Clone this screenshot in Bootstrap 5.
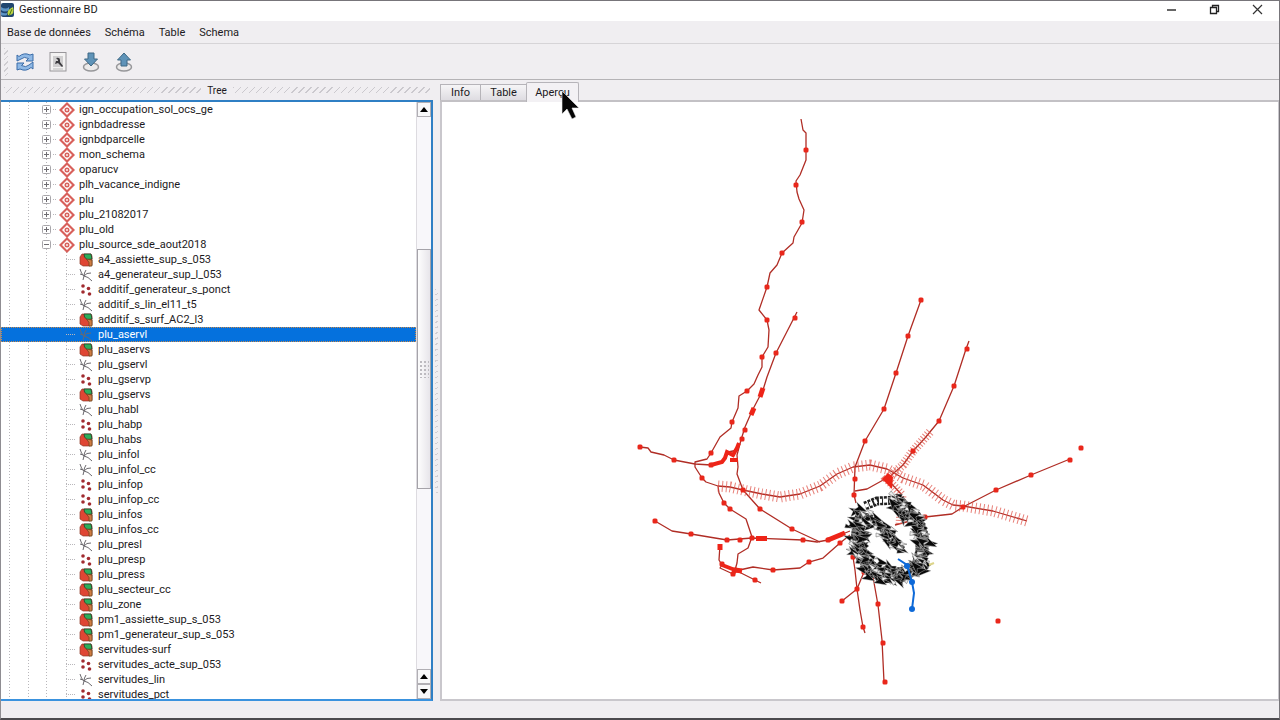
<!DOCTYPE html>
<html lang="fr">
<head>
<meta charset="utf-8">
<meta name="viewport" content="width=device-width, initial-scale=1">
<title>Gestionnaire BD</title>
<link rel="stylesheet" href="https://cdn.jsdelivr.net/npm/bootstrap@5.3.0/dist/css/bootstrap.min.css">
<style>
  body { font-family: Roboto, "Open Sans", sans-serif; font-size: 11px; line-height: 15px; color: #1c1a22; background: #f0eef1; }
  .app-window { border: 1px solid #77757a; border-left-color: #8f8d92; border-bottom: 2px solid #4c4a4e; }
  button { border: 0; background: none; padding: 0; color: inherit; }
  .title-bar { height: 20px; padding-bottom: 3px; background: #fff; }
  .win-btn { width: 43px; height: 16px; display: flex; align-items: center; justify-content: center; }
  .menu-bar { height: 23px; border-bottom: 1px solid #d6d4d7; padding-left: 6px; gap: 14px; }
  .tool-bar { height: 36px; border-bottom: 1px solid #b5b3b6; padding-left: 3px; }
  .tool-bar button { width: 33px; height: 28px; display: flex; align-items: center; justify-content: center; }
  .grip-v { width: 4px; height: 28px; background: repeating-linear-gradient(135deg, #cfcdd1 0 1px, transparent 1px 4px); }
  .work-area { min-height: 0; }
  .dock { flex: 0 0 432px; }
  .dock-title { height: 20px; gap: 6px; padding: 0 3px; font-size: 10px; }
  .grip-h { height: 6px; background: repeating-linear-gradient(135deg, #cbc9ce 0 1px, transparent 1px 5px); }
  .tree-frame { border: 2px solid #2f7fc4; border-left: 0; border-bottom-color: #3a92de; background: #fff; min-height: 0; }
  .tree-list { margin: 0; padding: 0; list-style: none; overflow: hidden; min-height: 0;
    background: repeating-linear-gradient(#b9b7bb 0 1px, transparent 1px 3px) 8px 0 / 1px 100% no-repeat, repeating-linear-gradient(#b9b7bb 0 1px, transparent 1px 3px) 27px 0 / 1px 100% no-repeat, repeating-linear-gradient(#b9b7bb 0 1px, transparent 1px 3px) 45px 0 / 1px 100% no-repeat; }
  .tree-list li { height: 15px; display: flex; align-items: center; white-space: nowrap; padding-left: 41px; }
  .tree-list li.leaf { padding-left: 65px;
    background: repeating-linear-gradient(#b9b7bb 0 1px, transparent 1px 3px) 65px 0 / 1px 100% no-repeat; }
  .tree-list li.picked { background: #0571dd; color: #fff; outline: 1px dotted #c98a4a; outline-offset: -1px; }
  .layer-name { margin-left: 5px; }
  .stub { width: 9px; height: 1px; background: repeating-linear-gradient(90deg, #b9b7bb 0 1px, transparent 1px 2px); }
  .tree-list .stub { margin-right: 4px; }
  .tree-list li.branch .stub { width: 4px; margin-right: 2px; margin-left: 2px; }
  .scroll-track { width: 15px; border-left: 1px solid #dddbe0; background: #f8f7fa; }
  .scroll-track button { height: 15px; border: 1px solid #b1afb4; background: #f8f8f9; display: flex; align-items: center; justify-content: center; }
  .thumb { border: 1px solid #a5a3a9; background: linear-gradient(90deg, #fdfdfd, #e7e5ea); flex: 0 0 240px; margin-top: 132px; }
  .thumb-dots { width: 10px; height: 18px; background: radial-gradient(circle, #bdbbc0 1px, transparent 1px) 0 0 / 4px 4px; }
  .splitter { flex: 0 0 7px; }
  .splitter-dots { width: 3px; height: 204px; background: repeating-linear-gradient(155deg, #d0ced3 0 1px, transparent 1px 5px); }
  .view-tabs { height: 22px; border-bottom: 2px solid #c3c1c5; }
  .view-tabs button { border: 1px solid #b6b4b9; border-bottom: 0; height: 16px; background: linear-gradient(#f6f5f7, #dedce1); margin-left: -1px; line-height: 15px; }
  .view-tabs button:first-child { margin-left: 0; width: 41px; }
  .view-tabs button:nth-child(2) { width: 47px; }
  .view-tabs button.active { width: 53px; height: 20px; background: #f3f1f4; border-radius: 2px 2px 0 0; margin-bottom: -2px; line-height: 19px; }
  .map-pane { background: #fff; border: 2px solid #c9c7cc; border-top: 0; border-right-width: 1px; min-height: 0; }
  .status-bar { height: 17px; }
  .pointer { position: absolute; left: 560px; top: 89px; }
</style>
</head>
<body>
<svg width="0" height="0" class="position-absolute" aria-hidden="true">
  <symbol id="i-schema" viewBox="0 0 16 16"><path d="M8 0 16 8 8 16 0 8z" fill="#d8605b"/><path d="M8 3 13 8 8 13 3 8z" fill="#fff"/><circle cx="8" cy="8" r="1.800" fill="#fbe3e2" stroke="#d8605b" stroke-width="1.400"/></symbol>
  <symbol id="i-poly" viewBox="0 0 14 14"><path d="M3 1h9l1 2v9l-2 1H4L1 11V4z" fill="#df4634" stroke="#8d3a28" stroke-width=".7"/><path d="M5 1h7l1 5-5 .5L5.500 4z" fill="#2dae5b" stroke="#22432a" stroke-width=".8"/><path d="M7.500 6 13 7v6h-3L10 9.500z" fill="#cf7c42" stroke="#6e4420" stroke-width=".8"/></symbol>
  <symbol id="i-line" viewBox="0 0 14 14"><path d="M1 1 2.500 5 5 8 4 12M5 8 8 5.500 12 5M5 8l4 1.500 4 3.500M7 2 5.500 5 5 8M1 6l3 1" fill="none" stroke="#6b696e"/></symbol>
  <symbol id="i-point" viewBox="0 0 14 14"><g fill="#a12b30"><circle cx="4" cy="3" r="1.800"/><circle cx="9.500" cy="5.500" r="1.800"/><circle cx="4" cy="9" r="1.800"/><circle cx="10.500" cy="11" r="1.800"/></g></symbol>
  <symbol id="i-plus" viewBox="0 0 9 9"><rect x=".5" y=".5" width="8" height="8" rx="1" fill="#fff" stroke="#a8a6aa"/><path d="M2 4.500h5M4.500 2v5" stroke="#6f6d72"/></symbol>
  <symbol id="i-minus" viewBox="0 0 9 9"><rect x=".5" y=".5" width="8" height="8" rx="1" fill="#fff" stroke="#a8a6aa"/><path d="M2 4.500h5" stroke="#6f6d72"/></symbol>
</svg>

<div class="app-window vh-100 d-flex flex-column overflow-hidden position-relative">
  <header class="title-bar d-flex align-items-center flex-shrink-0">
    <svg width="14" height="16" viewBox="0 0 14 16"><rect y="1" width="13" height="14" rx="2" fill="#21466f"/><path d="M0 5q5 3 8 0v3q-4 3-8 0z" fill="#5e95c5"/><path d="M0 10q3 2 6 1v2q-3 1-6 0z" fill="#5e95c5"/><path d="M7 13q-2-5 5-8 2 7-3 8z" fill="#bdd541"/><path d="M8 14l3-7" stroke="#4f7a22"/></svg>
    <span class="ms-1">Gestionnaire BD</span>
    <div class="ms-auto d-flex">
      <button class="win-btn" aria-label="Réduire"><svg width="11" height="11"><path d="M1 6h9" stroke="#333" stroke-width="1.500"/></svg></button>
      <button class="win-btn" aria-label="Restaurer"><svg width="11" height="11"><path d="M1.500 3.500h6v6h-6zM3.500 3V1.500h6v6H8" fill="none" stroke="#222" stroke-width="1.300"/></svg></button>
      <button class="win-btn" aria-label="Fermer"><svg width="11" height="11"><path d="M1 1l9 9M10 1 1 10" stroke="#333" stroke-width="1.200"/></svg></button>
    </div>
  </header>

  <nav class="menu-bar d-flex align-items-center flex-shrink-0">
    <button>Base de données</button><button>Schéma</button><button>Table</button><button>Schema</button>
  </nav>

  <div class="tool-bar d-flex align-items-center flex-shrink-0">
    <span class="grip-v"></span>
    <button aria-label="Actualiser"><svg width="20" height="20" viewBox="0 0 20 20"><path d="M2 9V3l2 1.500Q9 0 15 3l3-1v7h-7l2.500-2.500Q9 4 6 7z" fill="#8fb9e6" stroke="#3b6ca8"/><path d="M18 10v7l-2-1.500Q11 20 5 17l-3 1v-7h7l-2.500 2.500Q11 16 14 13z" fill="#8fb9e6" stroke="#3b6ca8"/></svg></button>
    <button aria-label="Fenêtre SQL"><svg width="18" height="20" viewBox="0 0 18 20"><rect x="1" y=".5" width="16" height="18.500" fill="#f4f3f3" stroke="#98969a"/><rect x="4" y="4" width="10" height="11" fill="#d0cfd0"/><path d="M7 6q4-1 4 2v2l3 4-1 1-4-4-3 1 1-3 2 0V8z" fill="#3c3b3f"/><path d="M4 17h10" stroke="#bbb"/></svg></button>
    <button aria-label="Importer"><svg width="18" height="20" viewBox="0 0 18 20"><ellipse cx="9" cy="15" rx="7.500" ry="4" fill="#eceaea" stroke="#97979a" stroke-width="1.500"/><path d="M6 1h6v6h3.500L9 14 2.500 7H6z" fill="#5f93b8" stroke="#3e6885"/></svg></button>
    <button aria-label="Exporter"><svg width="18" height="20" viewBox="0 0 18 20"><ellipse cx="9" cy="15" rx="7.500" ry="4" fill="#eceaea" stroke="#97979a" stroke-width="1.500"/><path d="M6 14h6V8h3.500L9 1 2.500 8H6z" fill="#5f93b8" stroke="#3e6885"/></svg></button>
  </div>

  <main class="work-area d-flex flex-fill">
    <section class="dock d-flex flex-column">
      <div class="dock-title d-flex align-items-center flex-shrink-0"><span class="grip-h flex-fill"></span><span>Tree</span><span class="grip-h flex-fill"></span></div>
      <div class="tree-frame d-flex flex-fill">
        <ul class="tree-list flex-fill" id="tree"></ul>
        <div class="scroll-track d-flex flex-column">
          <button aria-label="Haut"><svg width="8" height="5"><path d="M0 5 4 0l4 5z"/></svg></button>
          <div class="thumb d-flex align-items-center justify-content-center"><span class="thumb-dots"></span></div>
          <button class="mt-auto" aria-label="Haut"><svg width="8" height="5"><path d="M0 5 4 0l4 5z"/></svg></button>
          <button aria-label="Bas"><svg width="8" height="5"><path d="M0 0 4 5l4-5z"/></svg></button>
        </div>
      </div>
    </section>
    <div class="splitter d-flex align-items-center justify-content-center"><span class="splitter-dots"></span></div>
    <section class="flex-fill d-flex flex-column">
      <div class="view-tabs d-flex align-items-end flex-shrink-0" role="tablist">
        <button role="tab">Info</button><button role="tab">Table</button><button role="tab" class="active">Aperçu</button>
      </div>
      <div class="map-pane flex-fill">
        <svg class="d-block w-100 h-100" viewBox="442 102 836 597">
          <g fill="none" stroke="#b02d25" stroke-width="1.300" stroke-linejoin="round">
            <path d="M801 119 803 130 806 133 806 160 800 175 796 181 797 192 799 199 804 210 802 223 794 237 793 243 782 253 777 265 770 273 767 287 759 310 767 320 769 330 768 347 762 357 762 367 758 375 754 384 747 391 739 396 738 408 732 422 731 428 720 437 711 453 707 459 695 462 695 467 702 478 706 482 718 486 719 493 724 503 730 509 746 519 752 537 748 548 738 554 737 563 735 570"/>
            <path d="M797 312 776 353 767 377 763 390 752 411 745 427 741 440 737 455 738 467 737 474 743 490 760 509 792 529 820 542"/>
            <path d="M640 447 648 448 651 452 664 455 674 460 695 464 711 465 723 462 728 452 738 450"/>
            <path d="M655 521 672 531 691 534 727 540 752 538 803 540 817 542 828 540 840 535 850 531"/>
            <path d="M720 545 719 560 722 565 720 568 733 574M735 570 755 580 761 583M735 571 753 567 773 570 800 568 809 562 823 558 840 543 850 535"/>
            <path d="M921 300 908 336 896 373 884 409 865 441 855 467 854 495 856 503M855 491 867 489 885 479M969 341 966 349 954 386 939 421 925 438 913 451 903 465 887 479 902 495"/>
            <path d="M1070 459 1031 475 996 490 963 507 952 514 925 517 910 521 895 525"/>
            <path d="M853 557 855 570 857 589 860 610 863 627 865 633M864 572 857 589 842 601M873 577 878 605 882 640 884 682"/>
            <path d="M718 486 730 487 743 490 762 494 780 497 800 494 820 486 837 474 853 467 870 465 887 469 903 478 923 485 943 500 953 505 963 506 993 511 1027 521"/>
          </g>
          <g fill="none" stroke="#e0564c" stroke-dasharray="1 3" opacity=".75">
            <path stroke-width="11" d="M718 486 730 487 743 490 762 494 780 497 800 494 820 486 837 474 853 467 870 465 887 469 903 478 923 485 943 500 953 505 963 506 993 511 1027 521"/>
            <path stroke-width="9" stroke-dasharray="1 2" d="M930 432 913 451 903 465 887 479 902 495 900 525"/>
          </g>
          <path d="M882 479l6-6 5 4-1 12z" fill="#ee2418"/>
          <g fill="none" stroke="#ee2418" stroke-width="5">
            <path d="M763 388 760 397M754 408 751 415M756 538.500H767M735 570 742 571M720 544V550M828 540 845 533"/>
            <path d="M711 465 722 462 725 458 727 452 733 455 737 448 739 443M730 460H738M722 565 735 570 733 574" stroke-width="4"/>
          </g>
          <g id="stops" fill="#e9271b"></g>
          <g id="burst"></g>
          <g fill="none" stroke="#0d69d8" stroke-width="2"><path d="M898 559 907 565 912 582 914 593 912 609"/></g>
          <g fill="#0d69d8"><circle cx="907" cy="566" r="3"/><circle cx="912" cy="582" r="3"/><circle cx="912" cy="609" r="3"/></g>
          <path d="M929 565l5-2" stroke="#ddd58a" stroke-width="2"/>
        </svg>
      </div>
    </section>
  </main>
  <footer class="status-bar flex-shrink-0"></footer>
  <svg class="pointer" width="18" height="32" viewBox="0 0 18 32"><path d="M1 1v23l5-5 5 10 4-2-4-9h7z" fill="#050505" stroke="#eee" stroke-width=".6"/></svg>
</div>

<script>
  const schemas = ['ign_occupation_sol_ocs_ge', 'ignbdadresse', 'ignbdparcelle', 'mon_schema', 'oparucv', 'plh_vacance_indigne', 'plu', 'plu_21082017', 'plu_old', 'plu_source_sde_aout2018'];
  const layers = [
    ['poly', 'a4_assiette_sup_s_053'], ['line', 'a4_generateur_sup_l_053'], ['point', 'additif_generateur_s_ponct'], ['line', 'additif_s_lin_el11_t5'], ['poly', 'additif_s_surf_AC2_l3'],
    ['line', 'plu_aservl'], ['poly', 'plu_aservs'], ['line', 'plu_gservl'], ['point', 'plu_gservp'], ['poly', 'plu_gservs'], ['line', 'plu_habl'], ['point', 'plu_habp'], ['poly', 'plu_habs'],
    ['line', 'plu_infol'], ['line', 'plu_infol_cc'], ['point', 'plu_infop'], ['point', 'plu_infop_cc'], ['poly', 'plu_infos'], ['poly', 'plu_infos_cc'], ['line', 'plu_presl'], ['point', 'plu_presp'],
    ['poly', 'plu_press'], ['poly', 'plu_secteur_cc'], ['poly', 'plu_zone'], ['poly', 'pm1_assiette_sup_s_053'], ['poly', 'pm1_generateur_sup_s_053'], ['poly', 'servitudes-surf'],
    ['point', 'servitudes_acte_sup_053'], ['line', 'servitudes_lin'], ['point', 'servitudes_pct']];
  const icon = (name, w, h) => `<svg class="flex-shrink-0" width="${w}" height="${h}"><use href="#i-${name}"/></svg>`;
  document.getElementById('tree').innerHTML =
    schemas.map((s, i) => `<li class="branch">${icon(i === 9 ? 'minus' : 'plus', 9, 9)}<span class="stub"></span>${icon('schema', 16, 16)}<span class="ms-1">${s}</span></li>`).join('') +
    layers.map(([kind, s]) => `<li class="leaf${s === 'plu_aservl' ? ' picked' : ''}"><span class="stub"></span>${icon(kind, 14, 14)}<span class="layer-name">${s}</span></li>`).join('');

  const stops = [[806,150],[796,185],[802,222],[782,253],[767,287],[767,320],[762,357],[747,391],[732,422],[711,453],[702,478],[795,318],[776,353],[745,430],[742,439],[640,447],[674,460],[711,465],[743,490],[760,509],[792,529],[724,503],[730,509],[752,538],[655,521],[691,534],[727,540],[740,540],[803,540],[828,540],[722,564],[733,574],[735,570],[755,580],[773,570],[809,562],[840,543],[921,300],[908,336],[896,373],[884,409],[865,441],[855,479],[854,495],[967,349],[954,386],[939,421],[913,451],[1081,448],[1070,460],[1031,475],[996,490],[963,507],[925,517],[853,557],[857,589],[842,601],[864,572],[863,627],[878,604],[883,643],[885,682],[998,621]];
  document.getElementById('stops').innerHTML = stops.map(([x, y]) => `<rect x="${x - 2.5}" y="${y - 2.5}" width="5" height="5" rx="1.500"/>`).join('');

  // Dense arrow symbols packed along the ring road and its inner diagonal.
  let seed = 11;
  const rnd = () => (seed = (seed * 16807) % 2147483647) / 2147483647;
  const trail = [[863,512],[859,525],[857,540],[859,552],[868,564],[878,573],[888,575],[905,573],[917,568],[922,552],[922,535],[915,517],[903,507],[898,500]];
  const inner = [[876,523],[890,535],[902,550]];
  let out = '<g fill="none" stroke="#222" stroke-width="9"><path stroke-dasharray="3 1" d="M865 506 877 501 898 500"/></g><path d="M865 506 877 501 898 500" fill="none" stroke="#fff" stroke-width="4" stroke-dasharray="3 2"/>';
  const strands = (pts, spread) => {
    const d = 'M' + pts.join(' ');
    out += `<path d="${d}" fill="none" stroke="#777" stroke-width="${spread}"/><path d="${d}" fill="none" stroke="#222" stroke-width="${spread}" stroke-dasharray="1 2"/>`;
  };
  const scatter = (pts, n, spread) => {
    for (let i = 0; i < n; i++) {
      const t = (i / n) * (pts.length - 1), k = Math.floor(t), f = t - k;
      const x = pts[k][0] + (pts[k + 1][0] - pts[k][0]) * f + (rnd() - .5) * spread;
      const y = pts[k][1] + (pts[k + 1][1] - pts[k][1]) * f + (rnd() - .5) * spread;
      const a = Math.round((rnd() < .5 ? 15 : 215) + rnd() * 50 - 25), big = i % 4 === 0, pale = !big && i % 3 === 1;
      out += `<path transform="translate(${Math.round(x)} ${Math.round(y)}) rotate(${a})" d="${big ? 'M-6 -4 8 0 -5 5 -2 0z' : 'M-4 -2 4 0 -4 2z'}" fill="${pale ? '#eee' : '#090909'}" stroke="${pale ? '#444' : '#ccc'}" stroke-width=".4"/>`;
    }
  };
  strands(trail, 13); strands(inner, 8);
  scatter(trail, 230, 17);
  scatter(inner, 44, 11);
  document.getElementById('burst').innerHTML = out;
</script>
<script src="https://cdn.jsdelivr.net/npm/bootstrap@5.3.0/dist/js/bootstrap.bundle.min.js"></script>
</body>
</html>
